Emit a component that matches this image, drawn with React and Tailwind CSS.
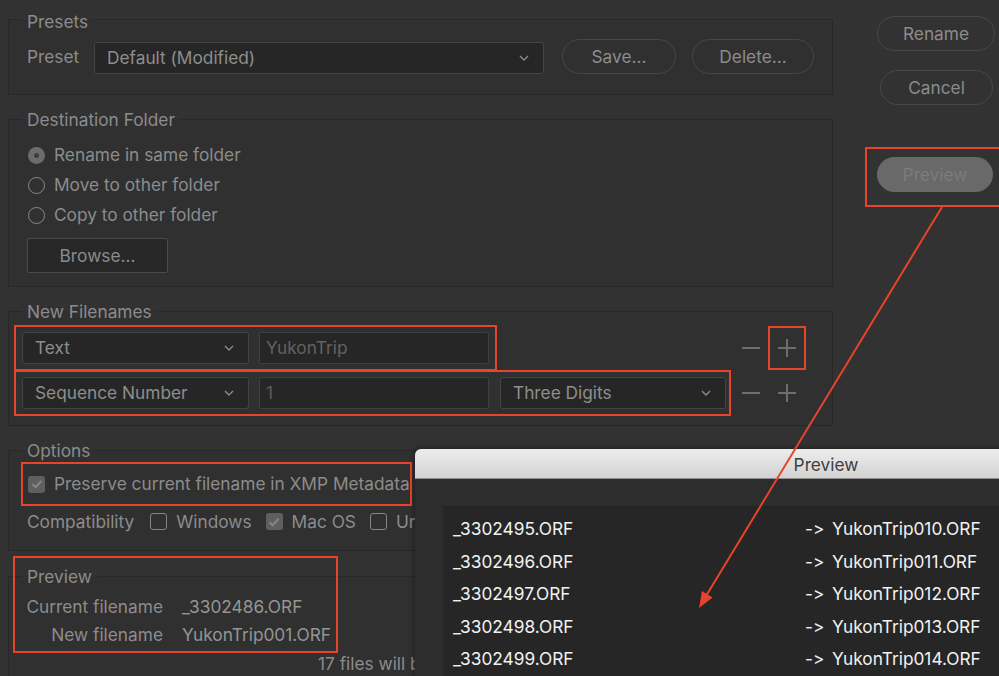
import React from "react";

const red = "border-[#e8432b]";

function Chevron() {
  return (
    <svg width="10" height="6" viewBox="0 0 10 6" className="shrink-0">
      <path d="M1 1 L5 5 L9 1" fill="none" stroke="#8a8a8a" strokeWidth="1.4" />
    </svg>
  );
}

function Select({ label, w }) {
  return (
    <div
      className={`${w} h-[32px] flex items-center justify-between pl-[12px] pr-[14px] bg-[#262626] border border-[#444444] rounded-[3px] text-[#8e8e8e]`}
    >
      <span>{label}</span>
      <Chevron />
    </div>
  );
}

function Field({ text, color = "text-[#626262]" }) {
  return (
    <div
      className={`w-[230px] h-[32px] flex items-center pl-[6px] bg-[#262626] border border-[#3f3f3f] rounded-[2px] ${color}`}
    >
      {text}
    </div>
  );
}

function Group({ title, h, mt, shift = "top-[1px]", children }) {
  return (
    <fieldset className={`${h} ${mt} border border-[#282828] bg-[#303030]`}>
      <legend className="ml-[12px] px-[6px] leading-[22px] text-[#8c8c8c]">
        <span className={`relative ${shift}`}>{title}</span>
      </legend>
      {children}
    </fieldset>
  );
}

function Pill({ children, w, className = "" }) {
  return (
    <div
      className={`${w} h-[35px] flex items-center justify-center rounded-full border border-[#474747] text-[#8c8c8c] ${className}`}
    >
      {children}
    </div>
  );
}

function Radio({ on, label }) {
  return (
    <div className="h-[30px] flex items-center pl-[19px]">
      {on ? (
        <div className="w-[17px] h-[17px] rounded-full bg-[#6c6c6c] flex items-center justify-center">
          <div className="w-[5px] h-[5px] rounded-full bg-[#3e3e3e]" />
        </div>
      ) : (
        <div className="w-[17px] h-[17px] rounded-full border-[1.5px] border-[#8a8a8a]" />
      )}
      <span className="ml-[9px] text-[#8c8c8c]">{label}</span>
    </div>
  );
}

function Check({ on }) {
  return on ? (
    <div className="w-[17px] h-[17px] rounded-[3px] bg-[#5f5f5f] flex items-center justify-center shrink-0">
      <svg width="12" height="10" viewBox="0 0 12 10">
        <path d="M1.5 5.2 L4.6 8.2 L10.5 1.8" fill="none" stroke="#858585" strokeWidth="2" />
      </svg>
    </div>
  ) : (
    <div className="w-[17px] h-[17px] rounded-[3px] border-[1.5px] border-[#858585] shrink-0" />
  );
}

function Controls({ marked }) {
  return (
    <div className="flex items-center">
      <div className="w-[26px] flex justify-center">
        <div className="w-[18px] h-[2px] bg-[#6e6e6e]" />
      </div>
      <div
        className={`ml-[4px] w-[38px] h-[44px] flex items-center justify-center border-2 ${
          marked ? red : "border-transparent"
        }`}
      >
        <div className="relative w-[18px] h-[18px]">
          <div className="absolute left-0 top-[8px] w-[18px] h-[2px] bg-[#6e6e6e]" />
          <div className="absolute top-0 left-[8px] w-[2px] h-[18px] bg-[#6e6e6e]" />
        </div>
      </div>
    </div>
  );
}

const rows = [
  ["_3302495.ORF", "YukonTrip010.ORF"],
  ["_3302496.ORF", "YukonTrip011.ORF"],
  ["_3302497.ORF", "YukonTrip012.ORF"],
  ["_3302498.ORF", "YukonTrip013.ORF"],
  ["_3302499.ORF", "YukonTrip014.ORF"],
];

export default function App() {
  return (
    <div className="relative w-[999px] h-[676px] overflow-hidden bg-[#323232] font-['Inter',sans-serif] text-[17.3px] [font-feature-settings:'calt'_0,'liga'_0]">
      <div className="flex">
        {/* left column */}
        <div className="ml-[8px] w-[825px] shrink-0 pt-[8px]">
          <Group title="Presets" h="h-[87px]" mt="" shift="top-[3px]">
            <div className="mt-[9px] pl-[18px] flex items-center h-[35px]">
              <span className="w-[67px] text-[#8c8c8c]">Preset</span>
              <div className="mt-[3px]">
                <Select label="Default (Modified)" w="w-[450px]" />
              </div>
              <Pill w="w-[114px]" className="ml-[18px]">Save...</Pill>
              <Pill w="w-[122px]" className="ml-[16px]">Delete...</Pill>
            </div>
          </Group>

          <Group title="Destination Folder" h="h-[179px]" mt="mt-[13px]">
            <div className="mt-[10px]">
              <Radio on label="Rename in same folder" />
              <Radio label="Move to other folder" />
              <Radio label="Copy to other folder" />
            </div>
            <div className="ml-[18px] mt-[8px] w-[141px] h-[35px] flex items-center justify-center bg-[#272727] border border-[#4a4a4a] rounded-[2px] text-[#8c8c8c]">
              Browse...
            </div>
          </Group>

          <Group title="New Filenames" h="h-[126px]" mt="mt-[13px]">
            <div className="mt-[3px] pl-[5px]">
              <div className="flex items-center">
                <div className="w-[724px]">
                  <div className={`w-[483px] h-[46px] border-2 ${red} flex items-center pl-[6px] gap-[10px]`}>
                    <Select label="Text" w="w-[227px]" />
                    <Field text="YukonTrip" />
                  </div>
                </div>
                <Controls marked />
              </div>
              <div className="flex items-center -mt-[1px]">
                <div className="w-[724px]">
                  <div className={`w-[717px] h-[46px] border-2 ${red} flex items-center pl-[6px]`}>
                    <Select label="Sequence Number" w="w-[227px]" />
                    <div className="ml-[10px]">
                      <Field text="1" color="text-[#5c5c5c]" />
                    </div>
                    <div className="ml-[11px]">
                      <Select label="Three Digits" w="w-[226px]" />
                    </div>
                  </div>
                </div>
                <Controls />
              </div>
            </div>
          </Group>

          <Group title="Options" h="h-[112px]" mt="mt-[13px]">
            <div className={`mt-[1px] ml-[12px] w-[391px] h-[44px] border-2 ${red} flex items-center pl-[5px] overflow-hidden whitespace-nowrap`}>
              <Check on />
              <span className="ml-[9px] text-[#8c8c8c]">Preserve current filename in XMP Metadata</span>
            </div>
            <div className="w-[406px] overflow-hidden h-[31px] flex items-center pl-[18px] text-[#8c8c8c] whitespace-nowrap">
              <span>Compatibility</span>
              <div className="ml-[16px]"><Check /></div>
              <span className="ml-[9px]">Windows</span>
              <div className="ml-[14px]"><Check on /></div>
              <span className="ml-[9px]">Mac OS</span>
              <div className="ml-[14px]"><Check /></div>
              <span className="ml-[9px]">Unix</span>
            </div>
          </Group>

          <Group title="Preview" h="h-[140px]" mt="mt-[14px]">
            <div className="mt-[6px]">
              <div className="h-[28px] flex items-center">
                <span className="w-[154px] text-right text-[#8c8c8c]">Current filename</span>
                <span className="ml-[19px] text-[#959595]">_3302486.ORF</span>
              </div>
              <div className="h-[28px] flex items-center">
                <span className="w-[154px] text-right text-[#8c8c8c]">New filename</span>
                <span className="ml-[19px] text-[#959595]">YukonTrip001.ORF</span>
              </div>
              <div className="w-[406px] overflow-hidden h-[30px] flex items-center pl-[309px] text-[#8c8c8c] whitespace-nowrap">
                17 files will be processed
              </div>
            </div>
          </Group>
        </div>

        {/* right column */}
        <div className="ml-[32px] shrink-0 flex flex-col">
          <Pill w="w-[118px]" className="ml-[12px] mt-[16px]">Rename</Pill>
          <Pill w="w-[113px]" className="ml-[15px] mt-[19px]">Cancel</Pill>
          <div className={`mt-[42px] w-[140px] h-[60px] border-2 ${red} pl-[10px] pt-[8px]`}>
            <div className="w-[116px] h-[35px] rounded-full bg-[#696969] flex items-center justify-center text-[#7b7b7b]">
              Preview
            </div>
          </div>
        </div>
      </div>

      {/* annotation around preview group */}
      <div className={`absolute left-[13px] top-[556px] w-[325px] h-[97px] border-2 ${red}`} />

      {/* preview dialog */}
      <div className="absolute left-[415px] top-[449px] w-[822px] h-[240px] rounded-tl-[6px] overflow-hidden bg-[#2d2d2d] shadow-[0_0_6px_rgba(0,0,0,0.5)]">
        <div className="h-[30px] bg-gradient-to-b from-[#ededed] to-[#d2d2d2] border-b border-[#8f8f8f] flex items-center justify-center text-[#3d3d3d] pt-[2px]">
          Preview
        </div>
        <div className="ml-[28px] mt-[27px] bg-[#262626] border-t border-[#222222] pt-[6px] text-[#f2f2f2]">
          {rows.map(([a, b]) => (
            <div key={a} className="h-[32.5px] flex items-center pl-[10px]">
              <span className="w-[352px]">{a}</span>
              <span className="w-[27px]">-&gt;</span>
              <span>{b}</span>
            </div>
          ))}
        </div>
      </div>

      {/* arrow */}
      <svg className="absolute left-0 top-0 pointer-events-none" width="999" height="676">
        <line x1="942" y1="207" x2="706" y2="596" stroke="#e8432b" strokeWidth="2" />
        <polygon points="699,608 712.5,597.5 702,591" fill="#e8432b" />
      </svg>
    </div>
  );
}
